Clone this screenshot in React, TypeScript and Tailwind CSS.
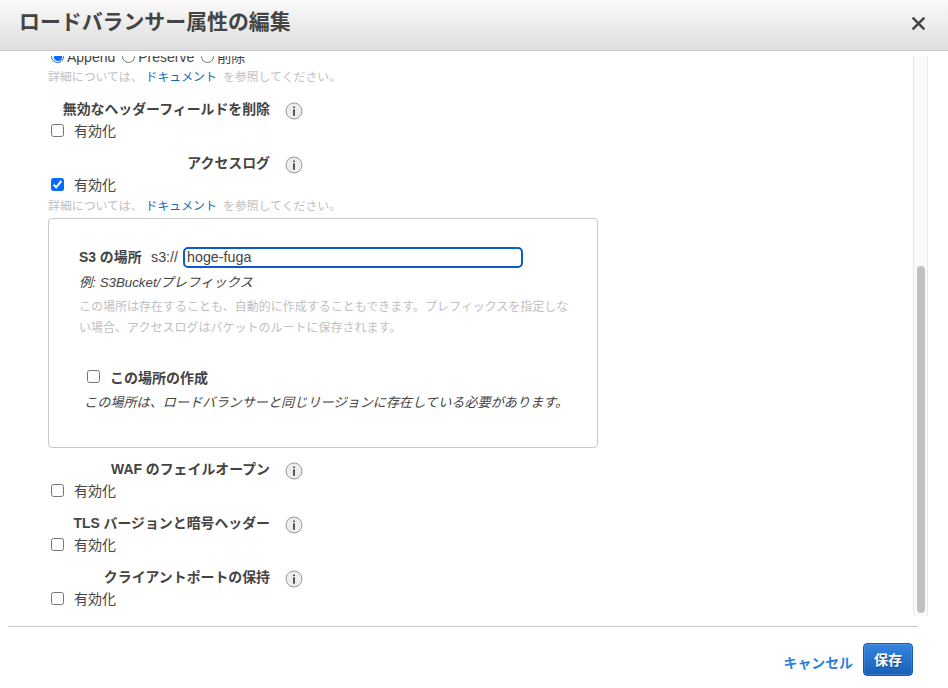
import { clsx } from "clsx";

const InfoIcon = () => (
  <svg width="18" height="18" viewBox="0 0 18 18" className="ml-[14.5px] mt-[4px] shrink-0" aria-label="情報">
    <circle cx="9" cy="9" r="8" fill="#ededed" stroke="#999" strokeWidth="1" />
    <path d="M8 4.4h2v1.6h-2zM8 7.3h2v6.4h-2z" fill="#555" />
  </svg>
);

const Checkbox = ({ checked = false }: { checked?: boolean }) => (
  <span
    role="checkbox"
    aria-checked={checked}
    className={clsx(
      "flex h-[13px] w-[13px] shrink-0 items-center justify-center rounded-[2.5px]",
      checked ? "bg-[#0a6cff]" : "border border-[#767676] bg-white",
    )}
  >
    {checked && (
      <svg width="13" height="13" viewBox="0 0 13 13" fill="none" stroke="#fff" strokeWidth="2">
        <path d="M2.6 6.8 5.2 9.3 10.3 3" />
      </svg>
    )}
  </span>
);

const Radio = ({ label, checked = false }: { label: string; checked?: boolean }) => (
  <span className="flex items-center">
    <span
      className={clsx(
        "mr-[3px] flex h-[13px] w-[13px] items-center justify-center rounded-full border",
        checked ? "border-[#0a6cff]" : "border-[#767676]",
      )}
    >
      {checked && <span className="h-[8px] w-[8px] rounded-full bg-[#0a6cff]" />}
    </span>
    {label}
  </span>
);

const HelpText = () => (
  <p className="flex h-5 items-center pt-[2px] text-[11.9px] text-[#bfbfbf]">
    詳細については、
    <a href="#" className="ml-[3px] mr-[6px] text-[#1166bb]">
      ドキュメント
    </a>
    を参照してください。
  </p>
);

type AttributeProps = { label: string; checked?: boolean; className?: string };

const Attribute = ({ label, checked, className }: AttributeProps) => (
  <div className={className}>
    <div className="flex h-[22px] items-center">
      <span className="w-[222px] whitespace-nowrap pt-px text-right text-[13.9px] font-bold">{label}</span>
      <InfoIcon />
    </div>
    <label className="flex h-[21px] items-center pl-[3px]">
      <Checkbox checked={checked} />
      <span className="ml-[10px] pt-[2px] leading-[21px]">有効化</span>
    </label>
  </div>
);

const S3Location = () => (
  <section className="h-[230px] w-[550px] rounded-[4px] border border-[#c8c8c8] pl-[30px] pt-[28px]">
    <div className="flex h-[21px] items-center whitespace-nowrap">
      <span className="w-[63px] text-[13.9px] font-bold">S3 の場所</span>
      <span className="ml-[9px] w-[28px] text-[14.3px]">s3://</span>
      <input
        defaultValue="hoge-fuga"
        className="ml-[4px] h-[21px] w-[340px] rounded-[5px] border-2 border-[#0b5bc9] bg-white px-[2px] pb-[2px] text-[14.3px] outline-none"
      />
    </div>
    <p className="mt-[4px] h-[21px] text-[13.3px] italic leading-[21px]">例: S3Bucket/プレフィックス</p>
    <p className="mt-[4px] whitespace-nowrap text-[12px] leading-[21px] text-[#bfbfbf]">
      この場所は存在することも、自動的に作成することもできます。プレフィックスを指定しな
      <br />
      い場合、アクセスログはバケットのルートに保存されます。
    </p>
    <label className="mt-[27px] flex h-[21px] items-center pl-[8px]">
      <Checkbox />
      <span className="ml-[10px] pt-[2px] text-[14px] font-bold">この場所の作成</span>
    </label>
    <p className="mt-[5px] whitespace-nowrap pl-[5px] text-[13.15px] italic leading-[21px]">
      この場所は、ロードバランサーと同じリージョンに存在している必要があります。
    </p>
  </section>
);

const App = () => {
  return (
    <div className="flex h-[688px] w-[948px] flex-col overflow-hidden bg-white font-['Liberation_Sans','Noto_Sans_CJK_JP',sans-serif] text-sm text-[#444]">
      <header className="flex h-[51px] shrink-0 items-center justify-between border-b border-[#c8c8c8] bg-linear-to-b from-[#fafafa] to-[#dedede] pl-[19px] pr-[23px]">
        <h1 className="pb-[6px] text-[20.9px] font-bold">ロードバランサー属性の編集</h1>
        <button aria-label="閉じる" className="mt-[-3px]">
          <svg width="13" height="13" viewBox="0 0 13 13" stroke="#444" strokeWidth="2.5">
            <path d="M.6.6 12.4 12.4M12.4.6.6 12.4" />
          </svg>
        </button>
      </header>

      <div className="mt-[5px] flex h-[560px] shrink-0 overflow-hidden">
        <main className="mt-[-11px] w-[913px] shrink-0 pl-[48px]">
          <div className="flex h-[21px] items-center gap-[7px] pl-[3px] pt-[2px]">
            <Radio label="Append" checked />
            <Radio label="Preserve" />
            <Radio label="削除" />
          </div>
          <HelpText />
          <Attribute label="無効なヘッダーフィールドを削除" className="mt-[12px]" />
          <Attribute label="アクセスログ" checked className="mt-[11px]" />
          <HelpText />
          <div className="mt-[3px]">
            <S3Location />
          </div>
          <Attribute label="WAF のフェイルオープン" className="mt-[10px]" />
          <Attribute label="TLS バージョンと暗号ヘッダー" className="mt-[11px]" />
          <Attribute label="クライアントポートの保持" className="mt-[11px]" />
        </main>
        <div className="w-[15px] border-x border-[#e8e8e8] bg-[#fafafa] pl-[3px] pt-[210px]">
          <div className="h-[347px] w-[8px] rounded-full bg-[#c1c1c1]" />
        </div>
      </div>

      <footer className="ml-[8px] mt-[10px] flex w-[910px] items-start justify-end border-t border-[#c8c8c8] pr-[5px] pt-[16px]">
        <a href="#" className="mr-[10px] mt-[11px] text-[13.9px] font-bold text-[#2e80dc]">
          キャンセル
        </a>
        <button className="h-[33px] w-[50px] rounded-[4px] border border-[#1b5dad] bg-linear-to-b from-[#3585e0] to-[#1a5fb8] font-bold text-white shadow-[inset_0_0_0_1px_rgba(255,255,255,0.12)] [text-shadow:0_1px_1px_rgba(0,0,0,0.45)]">
          保存
        </button>
      </footer>
    </div>
  );
};

export default App;
